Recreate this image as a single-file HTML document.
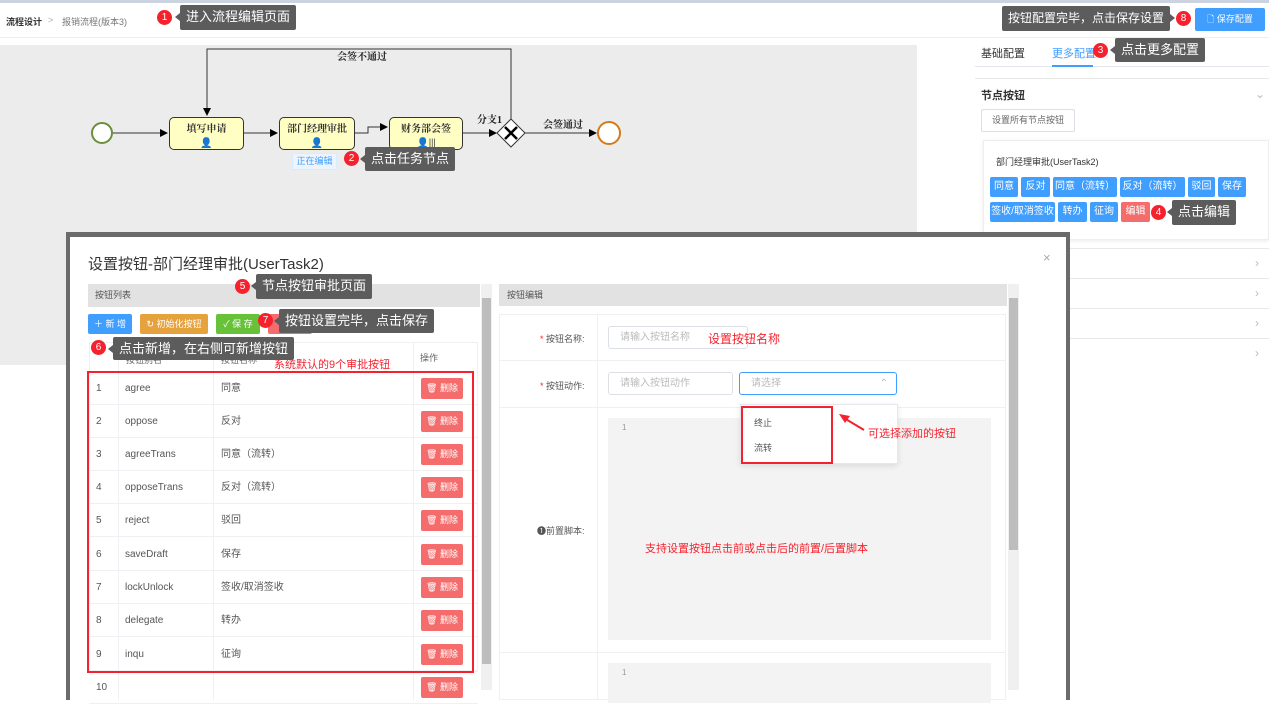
<!DOCTYPE html>
<html><head><meta charset="utf-8"><style>
*{box-sizing:border-box;margin:0;padding:0}
body{width:1269px;height:700px;position:relative;overflow:hidden;background:#fff;font-family:"Liberation Sans","Noto Sans CJK SC",sans-serif;font-size:12px;color:#333}
.a{position:absolute}
.tip{position:absolute;background:#5c5c5c;color:#fff;font-size:13px;line-height:24px;padding:0 6px;border-radius:2px;white-space:nowrap}
.tip:before{content:"";position:absolute;left:-5px;top:8px;border:4px solid transparent;border-right:5px solid #5c5c5c;border-left:0}
.tip.r:before{left:auto;right:-5px;border-right:0;border-left:5px solid #5c5c5c}
.num{position:absolute;width:15px;height:15px;border-radius:50%;background:#f5222d;color:#fff;font-size:10px;line-height:15px;text-align:center}
.bb{position:absolute;background:#409eff;color:#fff;font-size:10px;line-height:20px;height:20px;text-align:center;border-radius:2px}
.task{position:absolute;background:#ffffc4;border:1.5px solid #333;border-radius:5px;font-family:"Liberation Serif","Noto Serif CJK SC",serif;font-weight:bold;font-size:10px;text-align:center;padding-top:2px}
.col{position:absolute;left:975px;width:294px;height:1px;background:#e8e8e8}
.chev{position:absolute;left:1255px;color:#bbb;font-size:12px}
.tr{position:absolute;left:89px;width:389px;height:33px;border-bottom:1px solid #eef0f4;font-size:10px;color:#555}
.tr span{position:absolute;top:10px;line-height:13px;display:block;height:13px}
.del{position:absolute;left:332px;top:6px;width:42px;height:21px;background:#f56c6c;color:#fff;border-radius:2px;font-size:9px;line-height:21px;text-align:center}
.red{color:#f5222d}
</style></head><body>
<div class="a" style="left:0;top:0;width:1269px;height:3px;background:#ccd3e0"></div>
<div class="a" style="left:6px;top:15px;font-size:9px;font-weight:bold;color:#333">流程设计</div>
<div class="a" style="left:48px;top:15px;font-size:9px;color:#aaa">&gt;</div>
<div class="a" style="left:62px;top:15px;font-size:9px;color:#777">报销流程(版本3)</div>
<div class="a" style="left:0;top:37px;width:1269px;height:1px;background:#eee"></div>

<!-- canvas -->
<div class="a" style="left:0;top:45px;width:917px;height:320px;background:#ececec"></div>
<svg class="a" style="left:0;top:40px" width="917" height="200">
<defs><marker id="ar" markerWidth="8" markerHeight="8" refX="7" refY="4" orient="auto"><path d="M0,0L8,4L0,8z" fill="#000"/></marker></defs>
<g stroke="#333" stroke-width="1" fill="none">
<line x1="112" y1="93" x2="167" y2="93" marker-end="url(#ar)"/>
<line x1="244" y1="93" x2="277" y2="93" marker-end="url(#ar)"/>
<polyline points="355,93 368,93 368,87 387,87" marker-end="url(#ar)"/>
<line x1="463" y1="93" x2="496" y2="93" marker-end="url(#ar)"/>
<line x1="524" y1="93" x2="596" y2="93" marker-end="url(#ar)"/>
<polyline points="511,80 511,9 207,9 207,75" marker-end="url(#ar)"/>
</g>
<circle cx="102" cy="93" r="10" fill="#fff" stroke="#6a8f3c" stroke-width="2"/>
<circle cx="609" cy="93" r="11" fill="#fff" stroke="#d37b1a" stroke-width="2"/>
<polygon points="511,79 525,93 511,107 497,93" fill="#fff" stroke="#333"/>
<path d="M505,87L517,99M517,87L505,99" stroke="#000" stroke-width="2.5"/>
<g font-family="Liberation Serif,Noto Serif CJK SC,serif" font-size="10" font-weight="bold" fill="#222">
<text x="337" y="20">会签不通过</text><text x="477" y="83">分支1</text><text x="543" y="88">会签通过</text></g>
</svg>
<div class="task" style="left:169px;top:117px;width:75px;height:33px">填写申请<div style="font-size:10px;margin-top:3px">👤</div></div>
<div class="task" style="left:279px;top:117px;width:76px;height:33px">部门经理审批<div style="font-size:10px;margin-top:3px">👤</div></div>
<div class="task" style="left:389px;top:117px;width:74px;height:33px">财务部会签<div style="font-size:10px;margin-top:3px">👤|||</div></div>
<div class="a" style="left:292px;top:153px;width:45px;height:17px;background:#ecf5ff;border:1px solid #d9ecff;color:#409eff;font-size:9px;line-height:15px;text-align:center">正在编辑</div>

<!-- right panel -->
<div class="a" style="left:981px;top:45px;font-size:11px;color:#333">基础配置</div>
<div class="a" style="left:1052px;top:45px;font-size:11px;color:#409eff">更多配置</div>
<div class="a" style="left:975px;top:66px;width:294px;height:1px;background:#e4e7ed"></div>
<div class="a" style="left:1052px;top:65px;width:41px;height:2px;background:#409eff"></div>
<div class="col" style="top:78px"></div>
<div class="a" style="left:981px;top:87px;font-size:11px;font-weight:bold">节点按钮</div>
<div class="chev" style="top:87px">⌄</div>
<div class="a" style="left:981px;top:109px;width:94px;height:23px;border:1px solid #dcdfe6;border-radius:2px;font-size:9px;color:#666;line-height:21px;text-align:center">设置所有节点按钮</div>
<div class="a" style="left:983px;top:140px;width:286px;height:100px;border:1px solid #eee;box-shadow:0 1px 4px rgba(0,0,0,.08)"></div>
<div class="a" style="left:996px;top:155px;font-size:9px;color:#333">部门经理审批(UserTask2)</div>
<div class="bb" style="left:990px;top:177px;width:28px">同意</div>
<div class="bb" style="left:1021px;top:177px;width:29px">反对</div>
<div class="bb" style="left:1053px;top:177px;width:64px">同意（流转）</div>
<div class="bb" style="left:1120px;top:177px;width:65px">反对（流转）</div>
<div class="bb" style="left:1188px;top:177px;width:27px">驳回</div>
<div class="bb" style="left:1218px;top:177px;width:28px">保存</div>
<div class="bb" style="left:990px;top:202px;width:65px">签收/取消签收</div>
<div class="bb" style="left:1058px;top:202px;width:29px">转办</div>
<div class="bb" style="left:1090px;top:202px;width:28px">征询</div>
<div class="bb" style="left:1121px;top:202px;width:29px;background:#f56c6c">编辑</div>
<div class="col" style="top:248px"></div><div class="col" style="top:278px"></div><div class="col" style="top:308px"></div><div class="col" style="top:338px"></div>
<div class="chev" style="top:256px">›</div><div class="chev" style="top:286px">›</div><div class="chev" style="top:316px">›</div><div class="chev" style="top:346px">›</div>
<div class="a" style="left:1195px;top:8px;width:70px;height:23px;background:#409eff;border-radius:2px;color:#fff;font-size:9px;line-height:23px;text-align:center">🗋 保存配置</div>

<!-- modal -->
<div class="a" style="left:66px;top:232px;width:1004px;height:468px;background:#6b6b6b"></div>
<div class="a" style="left:70px;top:237px;width:996px;height:463px;background:#fff"></div>
<div class="a" style="left:88px;top:253px;font-size:15px;color:#333">设置按钮-部门经理审批(UserTask2)</div>
<div class="a" style="left:1043px;top:250px;font-size:13px;color:#aaa">×</div>
<div class="a" style="left:88px;top:284px;width:392px;height:23px;background:#e2e2e2;font-size:9px;line-height:23px;padding-left:7px;color:#555">按钮列表</div>
<div class="a" style="left:481px;top:284px;width:11px;height:406px;background:#f0f0f0"></div>
<div class="a" style="left:482px;top:298px;width:9px;height:366px;background:#bdbdbd"></div>
<div class="a" style="left:88px;top:314px;width:44px;height:20px;background:#409eff;color:#fff;font-size:9px;line-height:20px;text-align:center;border-radius:2px">＋ 新 增</div>
<div class="a" style="left:140px;top:314px;width:68px;height:20px;background:#e6a23c;color:#fff;font-size:9px;line-height:20px;text-align:center;border-radius:2px">↻ 初始化按钮</div>
<div class="a" style="left:216px;top:314px;width:44px;height:20px;background:#67c23a;color:#fff;font-size:9px;line-height:20px;text-align:center;border-radius:2px">✓ 保 存</div>
<div class="a" style="left:268px;top:314px;width:44px;height:20px;background:#f56c6c;border-radius:2px"></div>
<div class="a" style="left:89px;top:342px;width:389px;height:330px;border:1px solid #eef0f4"></div>
<div class="a" style="left:126px;top:353px;font-size:9px;color:#666">按钮别名</div>
<div class="a" style="left:221px;top:353px;font-size:9px;color:#666">按钮名称</div>
<div class="a" style="left:420px;top:351px;font-size:9px;color:#666">操作</div>
<div class="a" style="left:118px;top:342px;width:1px;height:358px;background:#eef0f4"></div>
<div class="a" style="left:213px;top:342px;width:1px;height:358px;background:#eef0f4"></div>
<div class="a" style="left:413px;top:342px;width:1px;height:358px;background:#eef0f4"></div>
<div class="tr" style="top:372px"><span style="left:7px">1</span><span style="left:36px">agree</span><span style="left:132px">同意</span><div class="del">🗑 删除</div></div>
<div class="tr" style="top:405px"><span style="left:7px">2</span><span style="left:36px">oppose</span><span style="left:132px">反对</span><div class="del">🗑 删除</div></div>
<div class="tr" style="top:438px"><span style="left:7px">3</span><span style="left:36px">agreeTrans</span><span style="left:132px">同意（流转）</span><div class="del">🗑 删除</div></div>
<div class="tr" style="top:471px"><span style="left:7px">4</span><span style="left:36px">opposeTrans</span><span style="left:132px">反对（流转）</span><div class="del">🗑 删除</div></div>
<div class="tr" style="top:504px"><span style="left:7px">5</span><span style="left:36px">reject</span><span style="left:132px">驳回</span><div class="del">🗑 删除</div></div>
<div class="tr" style="top:538px"><span style="left:7px">6</span><span style="left:36px">saveDraft</span><span style="left:132px">保存</span><div class="del">🗑 删除</div></div>
<div class="tr" style="top:571px"><span style="left:7px">7</span><span style="left:36px">lockUnlock</span><span style="left:132px">签收/取消签收</span><div class="del">🗑 删除</div></div>
<div class="tr" style="top:604px"><span style="left:7px">8</span><span style="left:36px">delegate</span><span style="left:132px">转办</span><div class="del">🗑 删除</div></div>
<div class="tr" style="top:638px"><span style="left:7px">9</span><span style="left:36px">inqu</span><span style="left:132px">征询</span><div class="del">🗑 删除</div></div>
<div class="tr" style="top:671px"><span style="left:7px">10</span><div class="del">🗑 删除</div></div>
<div class="a" style="left:87px;top:371px;width:387px;height:302px;border:2px solid #f5222d"></div>
<div class="a red" style="left:274px;top:356px;font-size:11px">系统默认的9个审批按钮</div>

<!-- right form -->
<div class="a" style="left:499px;top:284px;width:508px;height:22px;background:#e2e2e2;font-size:9px;line-height:22px;padding-left:8px;color:#555">按钮编辑</div>
<div class="a" style="left:1008px;top:284px;width:11px;height:406px;background:#f0f0f0"></div>
<div class="a" style="left:1009px;top:298px;width:9px;height:252px;background:#bdbdbd"></div>
<div class="a" style="left:499px;top:314px;width:507px;height:386px;border:1px solid #eef0f4"></div>
<div class="a" style="left:597px;top:314px;width:1px;height:386px;background:#eef0f4"></div>
<div class="a" style="left:499px;top:360px;width:507px;height:1px;background:#eef0f4"></div>
<div class="a" style="left:499px;top:407px;width:507px;height:1px;background:#eef0f4"></div>
<div class="a" style="left:499px;top:652px;width:507px;height:1px;background:#eef0f4"></div>
<div class="a" style="left:540px;top:332px;font-size:9px;color:#555"><span class="red">*</span> 按钮名称:</div>
<div class="a" style="left:540px;top:379px;font-size:9px;color:#555"><span class="red">*</span> 按钮动作:</div>
<div class="a" style="left:537px;top:524px;font-size:9px;color:#555">❶前置脚本:</div>
<div class="a" style="left:608px;top:326px;width:140px;height:23px;border:1px solid #dcdfe6;border-radius:3px;font-size:10px;color:#bbb;line-height:21px;padding-left:11px">请输入按钮名称</div>
<div class="a red" style="left:708px;top:330px;font-size:12px">设置按钮名称</div>
<div class="a" style="left:608px;top:372px;width:125px;height:23px;border:1px solid #dcdfe6;border-radius:3px;font-size:10px;color:#bbb;line-height:21px;padding-left:11px">请输入按钮动作</div>
<div class="a" style="left:739px;top:372px;width:158px;height:23px;border:1px solid #409eff;border-radius:3px;font-size:10px;color:#bbb;line-height:21px;padding-left:11px">请选择<span style="position:absolute;right:8px">⌃</span></div>
<div class="a" style="left:608px;top:418px;width:383px;height:222px;background:#f3f3f3"></div>
<div class="a" style="left:622px;top:423px;font-size:8px;color:#999">1</div>
<div class="a" style="left:608px;top:663px;width:383px;height:40px;background:#f3f3f3"></div>
<div class="a" style="left:622px;top:668px;font-size:8px;color:#999">1</div>
<div class="a red" style="left:645px;top:540px;font-size:11px">支持设置按钮点击前或点击后的前置/后置脚本</div>
<div class="a" style="left:740px;top:404px;width:158px;height:60px;background:#fff;border:1px solid #e4e7ed;box-shadow:0 2px 6px rgba(0,0,0,.1)"></div>
<div class="a" style="left:754px;top:416px;font-size:9px;color:#555">终止</div>
<div class="a" style="left:754px;top:441px;font-size:9px;color:#555">流转</div>
<div class="a" style="left:741px;top:406px;width:92px;height:58px;border:2px solid #f5222d"></div>
<svg class="a" style="left:836px;top:410px" width="30" height="25"><path d="M28,20L8,8" stroke="#f5222d" stroke-width="2"/><path d="M3,4L14,6L9,13z" fill="#f5222d"/></svg>
<div class="a red" style="left:868px;top:425px;font-size:11px">可选择添加的按钮</div>

<!-- tooltips -->
<div class="num" style="left:157px;top:10px">1</div><div class="tip" style="left:180px;top:5px;height:25px">进入流程编辑页面</div>
<div class="tip r" style="left:1002px;top:6px;height:25px;font-size:12px">按钮配置完毕，点击保存设置</div><div class="num" style="left:1176px;top:11px">8</div>
<div class="num" style="left:1093px;top:43px">3</div><div class="tip" style="left:1115px;top:38px;height:24px">点击更多配置</div>
<div class="num" style="left:344px;top:151px">2</div><div class="tip" style="left:365px;top:147px;height:24px">点击任务节点</div>
<div class="num" style="left:1151px;top:205px">4</div><div class="tip" style="left:1172px;top:200px;height:25px">点击编辑</div>
<div class="num" style="left:235px;top:279px">5</div><div class="tip" style="left:256px;top:274px;height:25px">节点按钮审批页面</div>
<div class="num" style="left:258px;top:313px">7</div><div class="tip" style="left:279px;top:309px;height:24px">按钮设置完毕，点击保存</div>
<div class="num" style="left:91px;top:340px">6</div><div class="tip" style="left:113px;top:337px;height:23px;line-height:23px">点击新增，在右侧可新增按钮</div>
</body></html>
